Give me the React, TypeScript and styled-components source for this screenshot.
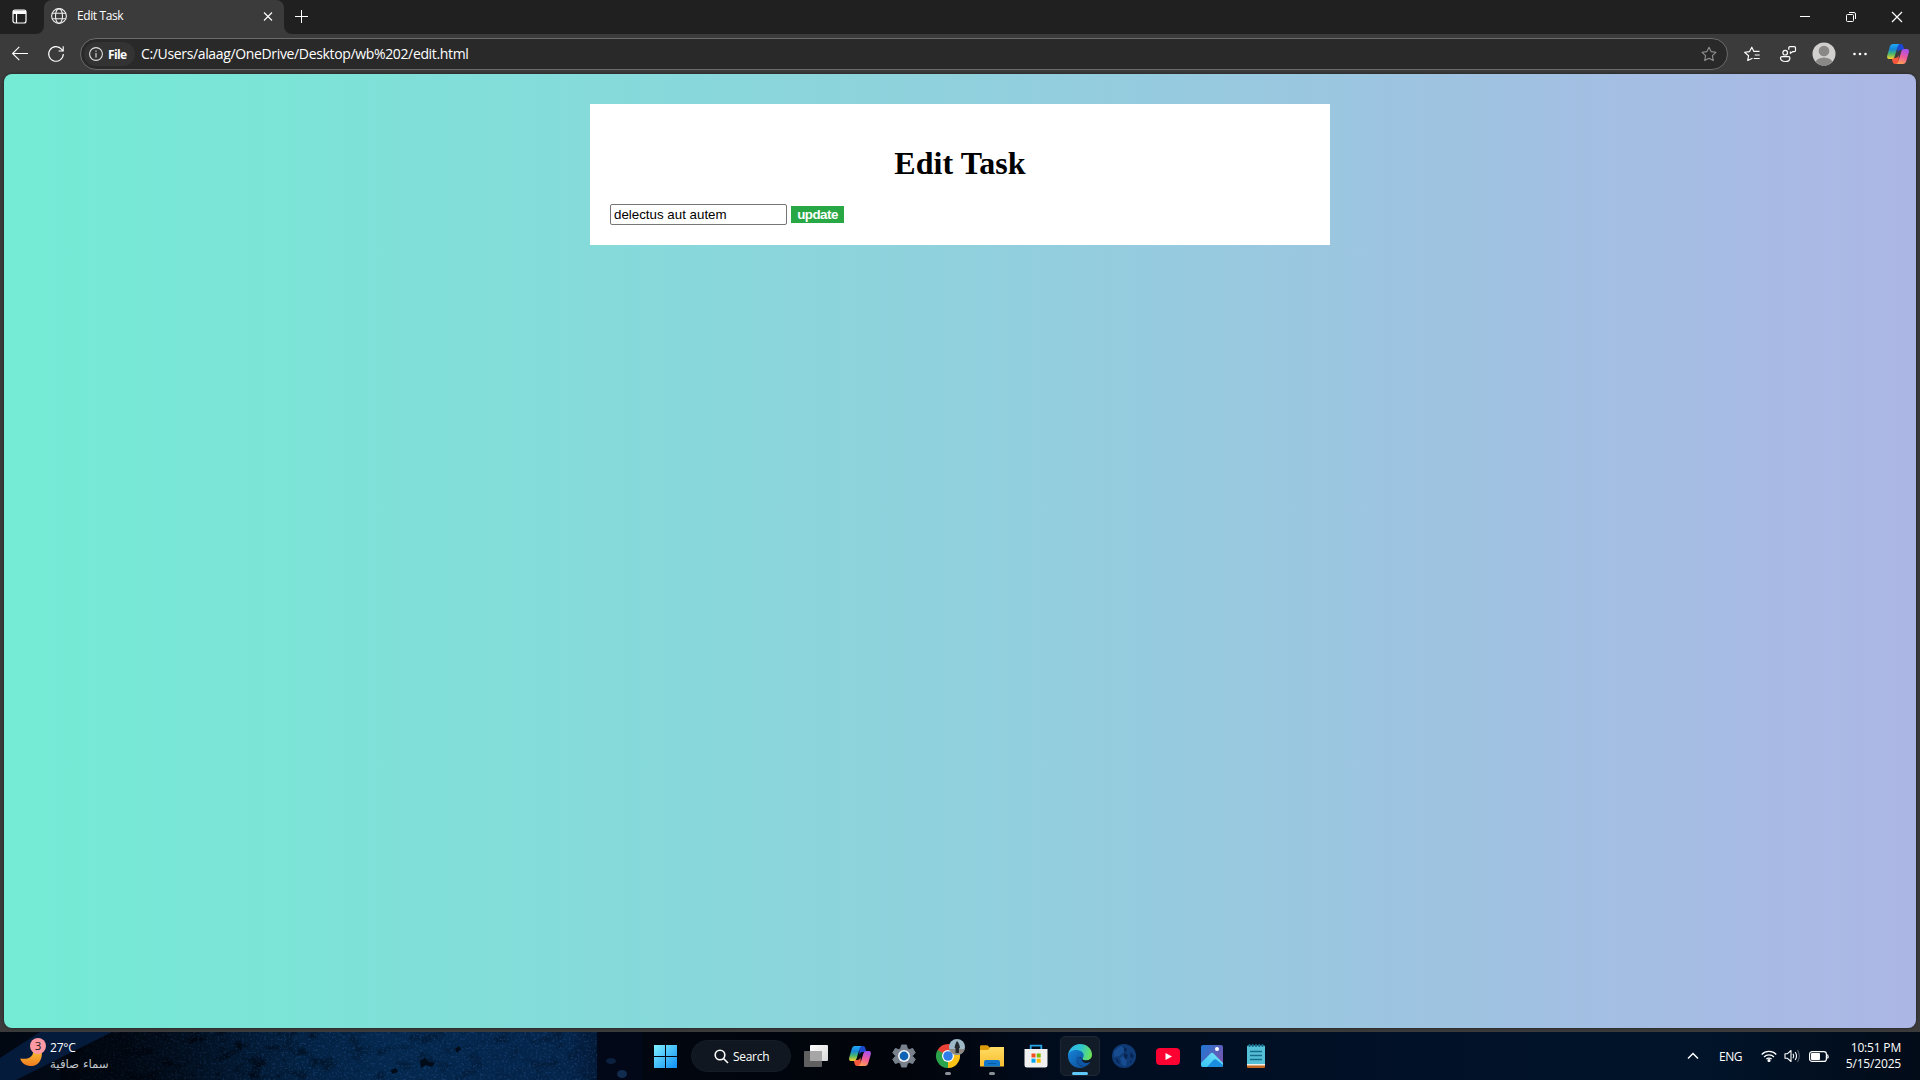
import React from 'react';
import styled, { createGlobalStyle } from 'styled-components';

const ui = '"Open Sans", "Noto Sans", sans-serif';

const Global = createGlobalStyle`
  html, body { margin: 0; padding: 0; overflow: hidden; background: #3b3b3b; }
  *, *::before, *::after { box-sizing: border-box; }
`;
const Screen = styled.div`
  width: 1920px; height: 1080px; display: flex; flex-direction: column; overflow: hidden;
  background: #3b3b3b; font-family: ${ui}; color: #fff;
`;
const Icon = styled.svg`display: block; flex: none; overflow: visible;`;

/* ---------- tab strip ---------- */
const TabStrip = styled.header`height: 34px; flex: none; display: flex; background: #202020;`;
const TabActions = styled.div`
  display: flex; align-items: center; background: #202020; padding-bottom: 2px;
  width: 44px; padding-left: 12px; border-bottom-right-radius: 8px;
`;
const Corner = styled.div<{ $grow?: boolean }>`
  background: #3b3b3b; display: flex; flex: ${p => (p.$grow ? '1' : 'none')};
`;
const Tab = styled.div`
  width: 240px; height: 34px; background: #3b3b3b; border-radius: 8px 8px 0 0;
  display: flex; align-items: center; padding: 0 11px 2px 7px;
`;
const TabTitle = styled.span`
  flex: 1; margin-left: 10px; font-size: 12px; letter-spacing: -0.4px; line-height: 16px;
`;
const TabRest = styled.div`
  flex: 1; display: flex; align-items: center; justify-content: space-between;
  background: #202020; border-bottom-left-radius: 8px; padding: 0 18px 2px 11px;
`;
const WindowButtons = styled.div`display: flex; align-items: center; gap: 36px; padding-top: 2px;`;

/* ---------- toolbar ---------- */
const Toolbar = styled.div`height: 40px; flex: none; display: flex; align-items: center; padding: 0 11px 0 12px;`;
const NavButtons = styled.div`display: flex; gap: 20px; width: 68px; align-items: center;`;
const Address = styled.div`
  width: 1648px; height: 32px; border: 1px solid #6b6b6b; border-radius: 16px; background: #292929;
  display: flex; align-items: center; padding: 0 10px 0 3px;
`;
const Chip = styled.div`
  width: 51px; height: 24px; border-radius: 12px; background: #333;
  display: flex; align-items: center; gap: 5px; padding-left: 5px;
  font-size: 12px; font-weight: 700; letter-spacing: -0.6px;
`;
const Url = styled.span`flex: 1; margin-left: 6px; font-size: 14px; letter-spacing: -0.35px; line-height: 20px;`;
const Actions = styled.div`flex: 1; display: flex; align-items: center; margin-left: 16px;`;
const Action = styled.div<{ $gap?: number }>`margin-left: ${p => p.$gap ?? 0}px;`;

/* ---------- page ---------- */
const Page = styled.main`
  height: 954px; margin: 0 4px 4px; border-radius: 8px; padding-top: 30px; flex: none;
  background: linear-gradient(to right, #74ebd5, #acb6e5); box-shadow: 0 0 3px rgba(0, 0, 0, 0.5);
`;
const Card = styled.section`
  width: 740px; height: 141px; margin: 0 auto; padding: 20px; background: #fff; color: #000;
`;
const Heading = styled.h1`
  margin: 21px 0 23px; font: 700 32px/36px "Liberation Serif", serif; text-align: center; letter-spacing: 0.08px;
`;
const Form = styled.form`display: flex; align-items: center; gap: 4px;`;
const TaskInput = styled.input`
  width: 177px; height: 21px; margin: 0; padding: 1px 2px 1px 3px;
  border: 1px solid #767676; border-radius: 2px; background: #fff; color: #000; outline: none;
  font: 13.333px "Liberation Sans", sans-serif;
`;
const Update = styled.button`
  width: 53px; height: 17px; border: 0; padding: 0; background: #28a745; color: #fff;
  font: 700 13.333px/16px "Liberation Sans", sans-serif; letter-spacing: -0.5px;
`;

/* ---------- taskbar ---------- */
const Taskbar = styled.footer`
  height: 48px; flex: none; display: grid; grid-template-columns: 643px 1fr auto; align-items: stretch;
  background: linear-gradient(90deg, #020816 0, #01060f 700px, #01040a 900px, #010d20 1080px, #011229 1500px, #01142a 1700px, #020b18 1920px);
`;
const Weather = styled.div`display: flex; align-items: center; position: relative; padding-left: 18px; overflow: hidden;`;
const Wallpaper = styled.svg`position: absolute; left: 0; top: 0; width: 644px; height: 48px;`;
const WeatherText = styled.div`
  position: relative; margin-left: 4px; display: flex; flex-direction: column; align-items: flex-start;
  font-size: 12px; line-height: 16px;
`;
const Temp = styled.span`letter-spacing: -0.2px;`;
const Sky = styled.span`color: #c3c7cc; font-family: "DejaVu Sans", sans-serif; font-size: 11.8px; direction: rtl;`;
const MoonIcon = styled(Icon)`position: relative;`;
const Apps = styled.nav`display: flex; align-items: center;`;
const Slot = styled.div`width: 44px; height: 48px; display: flex; align-items: center; justify-content: center; position: relative;`;
const Tile = styled.div`
  width: 40px; height: 40px; border-radius: 5px; background: #121c28; border: 1px solid #1d2733;
  display: flex; align-items: center; justify-content: center;
`;
const Marker = styled.i<{ $active?: boolean }>`
  position: absolute; bottom: 5px; left: 50%; transform: translateX(-50%);
  width: ${p => (p.$active ? 16 : 6)}px; height: 3px; border-radius: 2px;
  background: ${p => (p.$active ? '#60c8f8' : '#8c9198')};
`;
const Search = styled.div`
  width: 100px; height: 32px; margin: 0 3px 0 4px; border-radius: 16px; background: #101720; border: 1px solid #151c25;
  display: flex; align-items: center; padding-left: 22px; gap: 4px; font-size: 12px; letter-spacing: -0.3px;
`;
const Tray = styled.div`display: flex; align-items: center; padding-right: 19px; font-size: 12px;`;
const Lang = styled.span`width: 24px; margin: 0 18px 0 20px; letter-spacing: -0.5px;`;
const TrayIcons = styled.div`display: flex; align-items: center; gap: 7px;`;
const Clock = styled.div`width: 72px; text-align: right; line-height: 16px; letter-spacing: -0.18px; white-space: nowrap;`;

const Copilot = ({ id, w }: { id: string; w: number }) => (
  <Icon width={w} height={w * 0.91} viewBox="0 0 22 20">
    <defs>
      <linearGradient id={id + 'a'} x1="0" y1="0" x2="0" y2="1">
        <stop offset="0" stopColor="#20a8f5" /><stop offset=".35" stopColor="#1686d8" /><stop offset=".65" stopColor="#48b66c" /><stop offset="1" stopColor="#ffd02a" />
      </linearGradient>
      <linearGradient id={id + 'b'} x1=".6" y1="0" x2=".3" y2="1">
        <stop offset="0" stopColor="#a650ef" /><stop offset=".5" stopColor="#ef5b9a" /><stop offset="1" stopColor="#ffa052" />
      </linearGradient>
    </defs>
    <path d="M10 0h4c1.500 0 2 1 2.500 2.500L17.300 6H14c-2 0-3 1-3.500 3z" fill="#1b48cf" />
    <path d="M12 20H8c-1.500 0-2-1-2.500-2.500L4.700 14H8c2 0 3-1 3.500-3z" fill="#f4573b" />
    <path d="M6 0h7c-1.500 0-2 1.500-2.500 3L7.800 12c-.6 2-1.500 3-3.300 3H2C.3 15-.3 13.500.2 11.700L2.700 3C3.300 1 4.300 0 6 0z" fill={`url(#${id}a)`} />
    <path d="M16 20H9c1.500 0 2-1.500 2.500-3l2.700-9c.6-2 1.500-3 3.300-3H20c1.700 0 2.300 1.500 1.800 3.300L19.300 17c-.6 2-1.600 3-3.300 3z" fill={`url(#${id}b)`} />
  </Icon>
);

const star = 'M8 1.200l2.100 4.400 4.800.7-3.500 3.400.9 4.900L8 12.300l-4.300 2.300.9-4.900L1.100 6.300l4.800-.7z';

export default function App() {
  return (
    <Screen>
      <Global />
      <TabStrip>
        <Corner>
          <TabActions>
            <Icon width="15" height="15" viewBox="0 0 15 15" fill="none" stroke="#fff" strokeWidth="1.200">
              <rect x="1" y="1" width="13" height="13" rx="2" /><path d="M1 1.500h13V5H1z" fill="#fff" stroke="none" /><path d="M4.500 5v9" />
            </Icon>
          </TabActions>
        </Corner>
        <Tab>
          <Icon width="16" height="16" viewBox="0 0 16 16" fill="none" stroke="#eee" strokeWidth="1.100">
            <circle cx="8" cy="8" r="7.400" /><ellipse cx="8" cy="8" rx="3.500" ry="7.400" /><path d="M1.300 5.300h13.400M1.300 10.700h13.400" />
          </Icon>
          <TabTitle>Edit Task</TabTitle>
          <Icon width="10" height="10" viewBox="0 0 10 10" stroke="#fff" strokeWidth="1.100"><path d="M1 1.500l8 8M9 1.500l-8 8" /></Icon>
        </Tab>
        <Corner $grow>
          <TabRest>
            <Icon width="13" height="13" viewBox="0 0 13 13" stroke="#fff"><path d="M0 6.500h13M6.500 0v13" /></Icon>
            <WindowButtons>
              <Icon width="10" height="10" viewBox="0 0 10 10" stroke="#fff"><path d="M0 4.500h10" /></Icon>
              <Icon width="10" height="10" viewBox="0 0 10 10" stroke="#fff" fill="none"><rect x=".5" y="2.500" width="7" height="7" rx="1" /><path d="M3 .5h5A1.500 1.500 0 0 1 9.500 2v5" /></Icon>
              <Icon width="10" height="10" viewBox="0 0 10 10" stroke="#fff" strokeWidth="1.200"><path d="M0 0l10 10M10 0L0 10" /></Icon>
            </WindowButtons>
          </TabRest>
        </Corner>
      </TabStrip>

      <Toolbar>
        <NavButtons>
          <Icon width="16" height="16" viewBox="0 0 16 16" fill="none" stroke="#fff" strokeWidth="1.100"><path d="M16 7.500H.8M7.300.8L.6 7.500l6.700 6.700" /></Icon>
          <Icon width="16" height="16" viewBox="0 0 16 16" fill="none" stroke="#fff" strokeWidth="1.100"><path d="M15.300 8A7.300 7.300 0 1 1 13.700 3.400L15 5M15.200.3V5h-4.700" /></Icon>
        </NavButtons>
        <Address>
          <Chip>
            <Icon width="14" height="14" viewBox="0 0 14 14" fill="none" stroke="#e0e0e0" strokeWidth="1.100"><circle cx="7" cy="7" r="6.400" /><path d="M7 6v4.500M7 3.500v1.300" /></Icon>
            File
          </Chip>
          <Url>C:/Users/alaag/OneDrive/Desktop/wb%202/edit.html</Url>
          <Icon width="16" height="16" viewBox="0 0 16 16" fill="none" stroke="#909090" strokeWidth="1.100" strokeLinejoin="round"><path d={star} /></Icon>
        </Address>
        <Actions>
          <Action>
            <Icon width="16" height="16" viewBox="0 0 16 16" fill="none" stroke="#fff" strokeWidth="1.150" strokeLinejoin="round"><path d="M8.500 12.300L3.700 14.600l.9-4.900L.6 6.300l5-.7L7.800 1.200l2.100 4.200h5.600M10.700 9h5M9.700 12.500h6" /></Icon>
          </Action>
          <Action $gap={20}>
            <Icon width="16" height="16" viewBox="0 0 16 16" fill="none" stroke="#fff" strokeWidth="1.200" strokeLinejoin="round"><circle cx="5.200" cy="6.700" r="2.300" /><path d="M1.700 10.700h7a1.200 1.200 0 0 1 1.200 1.200c0 2.200-2 3.600-4.700 3.600S.5 14.100.5 11.900a1.200 1.200 0 0 1 1.200-1.200zM8.800 3.800V1.800A1.200 1.200 0 0 1 10 .6h4.300a1.200 1.200 0 0 1 1.200 1.200v2.700a1.200 1.200 0 0 1-1.200 1.200h-1.700L10.400 7.300V5.500" /></Icon>
          </Action>
          <Action $gap={16}>
            <Icon width="24" height="24" viewBox="0 0 24 24">
              <clipPath id="avatar"><circle cx="12" cy="12" r="11.500" /></clipPath>
              <circle cx="12" cy="12" r="11.500" fill="#d2d0ce" /><g clipPath="url(#avatar)" fill="#8a8886"><circle cx="12" cy="9" r="5.300" /><ellipse cx="12" cy="21" rx="8.500" ry="5.600" /></g>
            </Icon>
          </Action>
          <Action $gap={17}>
            <Icon width="14" height="4" viewBox="0 0 14 4" fill="#fff"><circle cx="1.500" cy="2" r="1.300" /><circle cx="7" cy="2" r="1.300" /><circle cx="12.500" cy="2" r="1.300" /></Icon>
          </Action>
          <Action $gap={20}><Copilot id="edgeCopilot" w={22} /></Action>
        </Actions>
      </Toolbar>

      <Page>
        <Card>
          <Heading>Edit Task</Heading>
          <Form>
            <TaskInput type="text" defaultValue="delectus aut autem" />
            <Update type="button">update</Update>
          </Form>
        </Card>
      </Page>

      <Taskbar>
        <Weather>
          <Wallpaper viewBox="0 0 644 48" preserveAspectRatio="none">
            <defs>
              <linearGradient id="rock" x1="0" x2="1">
                <stop offset="0" stopColor="#020812" /><stop offset=".2" stopColor="#020c1a" /><stop offset=".4" stopColor="#031d3a" /><stop offset=".65" stopColor="#04284e" /><stop offset=".95" stopColor="#05254b" /><stop offset="1" stopColor="#041a38" />
              </linearGradient>
              <filter id="grain" x="0" y="0" width="100%" height="100%" colorInterpolationFilters="sRGB">
                <feTurbulence type="fractalNoise" baseFrequency=".06 .08" numOctaves="5" seed="11" />
                <feColorMatrix values="0 0 0 0 0  0 0 0 0 .02  0 0 0 0 .06  4 0 0 0 -2.050" />
              </filter>
              <filter id="sparkle" x="0" y="0" width="100%" height="100%" colorInterpolationFilters="sRGB">
                <feTurbulence type="fractalNoise" baseFrequency=".45" numOctaves="3" seed="3" />
                <feColorMatrix values="0 0 0 0 .13  0 0 0 0 .3  0 0 0 0 .52  0 5 0 0 -2.700" />
              </filter>
              <linearGradient id="shade" x1="0" x2="1">
                <stop offset="0" stopColor="#01050c" stopOpacity=".8" /><stop offset=".45" stopColor="#01050c" stopOpacity="0" />
              </linearGradient>
              <linearGradient id="fade" x1="0" x2="1">
                <stop offset="0" stopColor="#fff" /><stop offset=".35" stopColor="#fff" stopOpacity=".8" /><stop offset=".55" stopColor="#fff" stopOpacity=".3" /><stop offset="1" stopColor="#fff" stopOpacity=".25" />
              </linearGradient>
              <mask id="grainMask"><rect width="644" height="48" fill="url(#fade)" /></mask>
            </defs>
            <rect width="597" height="48" fill="url(#rock)" />
            <g mask="url(#grainMask)"><rect x="60" width="537" height="48" filter="url(#grain)" /></g>
            <rect x="80" width="517" height="48" filter="url(#sparkle)" opacity=".4" />
            <path d="M420 29l5-3 4 4 6 1-3 4-6-2-5 3zM391 38l5-2 2 4-6 2zM455 17l4-3 2 3-4 4z" fill="#020b18" />
            <rect x="60" width="537" height="48" fill="url(#shade)" />
            <path d="M0 26L40 0h72L0 56z" fill="#051b3c" />
            <path d="M597 0h47v48h-47z" fill="#020817" />
            <ellipse cx="611" cy="29" rx="5" ry="3" fill="#0c2040" /><ellipse cx="622" cy="42" rx="5" ry="4" fill="#122c50" />
          </Wallpaper>
          <MoonIcon width="28" height="30" viewBox="0 0 28 30">
            <defs><linearGradient id="moon" x1="0" x2="0" y1="0" y2="1"><stop offset="0" stopColor="#f9c63b" /><stop offset="1" stopColor="#f07c1d" /></linearGradient></defs>
            <path d="M23.500 8c2 10-3 17-10 17-5.500 0-9.500-2-11.300-7.500 8.500 1.500 14-2 13-9.500z" fill="url(#moon)" />
            <circle cx="20" cy="5" r="8" fill="#ff99a4" />
            <text x="20" y="9" textAnchor="middle" fontSize="11.500" fill="#1a1a1a">3</text>
          </MoonIcon>
          <WeatherText><Temp>27°C</Temp><Sky>سماء صافية</Sky></WeatherText>
        </Weather>

        <Apps>
          <Slot>
            <Icon width="23" height="23" viewBox="0 0 23 23">
              <defs><linearGradient id="win" x1="0" y1="0" x2="23" y2="23" gradientUnits="userSpaceOnUse"><stop offset="0" stopColor="#7ff0ff" /><stop offset="1" stopColor="#0f8ff5" /></linearGradient></defs>
              <path d="M0 0h11v11H0zM12 0h11v11H12zM0 12h11v11H0zM12 12h11v11H12z" fill="url(#win)" />
            </Icon>
          </Slot>
          <Search>
            <Icon width="15" height="15" viewBox="0 0 15 15" fill="none" stroke="#fff" strokeWidth="1.600"><circle cx="6" cy="6" r="4.800" /><path d="M9.500 9.500L14 14" /></Icon>
            Search
          </Search>
          <Slot>
            <Icon width="24" height="22" viewBox="0 0 24 22">
              <defs><linearGradient id="tv" x1="0" y1="0" x2="1" y2="1"><stop offset="0" stopColor="#fff" /><stop offset="1" stopColor="#d8d8d8" /></linearGradient></defs>
              <rect x="6" width="18" height="16" rx="1" fill="url(#tv)" /><rect y="6" width="18" height="16" rx="1" fill="#606060" /><path d="M6 6h12v10H6z" fill="#a6a6a6" />
            </Icon>
          </Slot>
          <Slot><Copilot id="barCopilot" w={22} /></Slot>
          <Slot>
            <Icon width="24" height="24" viewBox="0 0 24 24">
              <path d="M9.500 1h5l.8 3.500 2 1.100L20.700 4.500 23.300 9l-2.600 2.300v1.400L23.300 15l-2.600 4.500-3.400-1.100-2 1.100-.8 3.500h-5l-.8-3.500-2-1.100-3.400 1.100L.7 15l2.600-2.300v-1.400L.7 9l2.600-4.500 3.400 1.100 2-1.100z" fill="#79818c" stroke="#79818c" strokeLinejoin="round" />
              <circle cx="12" cy="12" r="6" fill="#f2f5f8" /><circle cx="12" cy="12" r="4.400" fill="#0d62b4" />
            </Icon>
          </Slot>
          <Slot>
            <Icon width="24" height="24" viewBox="0 0 24 24">
              <path d="M12 12L12 24A12 12 0 0 1 1.600 6z" fill="#2ba24c" />
              <path d="M12 12l10.400-6A12 12 0 0 1 12 24z" fill="#fbc116" /><path d="M1.600 6L6.800 15 12 12V6.500z" fill="#2ba24c" /><path d="M1.600 6A12 12 0 0 1 22.400 6H12l-5.200 3z" fill="#e94235" /><path d="M12 24l5.200-9-5.200-3z" fill="#fbc116" />
              <circle cx="12" cy="12" r="6" fill="#fff" /><circle cx="12" cy="12" r="4.800" fill="#2f7de9" />
              <circle cx="21" cy="3" r="8" fill="#9db9c8" /><path d="M13.300 5a8 8 0 0 0 15.400 0z" fill="#8d8880" /><path d="M19.500 9V4.500l-1-1 .8-3 1.200-3h1.200l1.500 3 .8 3-1 1V9z" fill="#252a30" />
            </Icon>
            <Marker />
          </Slot>
          <Slot>
            <Icon width="24" height="22" viewBox="0 0 24 22">
              <defs><linearGradient id="fold" x1="0" y1="0" x2="0" y2="1"><stop offset="0" stopColor="#ffdc62" /><stop offset="1" stopColor="#f9bd31" /></linearGradient></defs>
              <path d="M0 8V1.500Q0 .3 1.300.3h6L10 2.500V8z" fill="#dc9b08" /><path d="M0 5h8l2.500-3H24v19.600H0z" fill="url(#fold)" />
              <path d="M4 21.500V17q0-2 2-2h12q2 0 2 2v4.500z" fill="#1177cb" /><path d="M8 18.500h8" stroke="#0b5aa6" />
            </Icon>
            <Marker />
          </Slot>
          <Slot>
            <Icon width="24" height="24" viewBox="0 0 24 24">
              <path d="M6.700 5.500V1.700h10.600v3.800" fill="none" stroke="#27a3e6" strokeWidth="1.800" />
              <path d="M.5 5h23v16q0 2.500-2.500 2.500H3Q.5 23.500.5 21z" fill="#f0f0f0" />
              <path d="M7.500 9.500h4v4h-4z" fill="#f25022" /><path d="M12.700 9.500h4v4h-4z" fill="#7fba00" /><path d="M7.500 14.700h4v4h-4z" fill="#00a4ef" /><path d="M12.700 14.700h4v4h-4z" fill="#ffb900" />
            </Icon>
          </Slot>
          <Slot>
            <Tile>
              <Icon width="24" height="24" viewBox="0 0 24 24">
                <defs>
                  <linearGradient id="eTop" x1="0" y1=".3" x2="1" y2=".5"><stop offset="0" stopColor="#2fb5ee" /><stop offset=".5" stopColor="#2fc5cf" /><stop offset="1" stopColor="#6be257" /></linearGradient>
                  <linearGradient id="eLow" x1="0" y1="0" x2="1" y2="1"><stop offset="0" stopColor="#1684d8" /><stop offset="1" stopColor="#0b4a94" /></linearGradient>
                </defs>
                <path d="M0 12C.4 5 5.500 0 12 0c7 0 12 5 12 10.500 0 4-2.800 6-6 6-3 0-4.300-1.200-3.700-2.200 1.700-2.600.2-6-4.300-6-4.500 0-8 1.700-10 3.700z" fill="url(#eTop)" />
                <path d="M0 12C.5 8 4 6 8 6c4.500 0 7.700 2.300 7.700 5.500 0 1.600-.9 2.300-1.400 3-3-2.500-6-.5-5.500 2.500.6 4 5 6.500 10 4.700C16.500 23.500 14.300 24 12 24 5.300 24 0 18.600 0 12z" fill="url(#eLow)" />
                <path d="M9 12.500c-1.800 4.500 1.500 9.800 7.500 9.800 2.700-.4 4.800-2 5.900-4.300-4.400 2.400-8.900.5-8.100-3.500-2-.6-3.500-1.700-5.300-2z" fill="#0f56a5" />
                <path d="M14.300 14.300c-.6 1 .7 2.200 3.700 2.200 2 0 3.800-.7 4.900-2-1 2.700-3 3.700-5 3.700-2.600 0-5.100-1.600-3.600-3.900z" fill="#121c28" />
              </Icon>
            </Tile>
            <Marker $active />
          </Slot>
          <Slot>
            <Icon width="24" height="24" viewBox="0 0 24 24">
              <circle cx="12" cy="12" r="12" fill="#0e3a75" />
              <path d="M2 7l7-5 4 3-2 4-4 3-5 1zM8 14l4-2 3 4-1 6-4-1z" fill="#174c90" />
              <path d="M12 3l3 2-1 3-2-1zM12 9l4 2-2 5-2-3zM3 13l3 3 2 4-3-2zM19 8l3 4-2 3-2-3zM18 17l2-1-2 4z" fill="#082552" />
            </Icon>
          </Slot>
          <Slot><Icon width="24" height="17" viewBox="0 0 24 17"><rect width="24" height="17" rx="4" fill="#ff0033" /><path d="M9.500 5l6.500 3.500L9.500 12z" fill="#fff" /></Icon></Slot>
          <Slot>
            <Icon width="22" height="22" viewBox="0 0 22 22">
              <defs>
                <linearGradient id="ph" x1="0" y1="0" x2="1" y2=".6"><stop offset="0" stopColor="#1d78d4" /><stop offset="1" stopColor="#7355b0" /></linearGradient>
                <linearGradient id="hill" x1="0" y1="1" x2="1" y2="0"><stop offset="0" stopColor="#35c3f3" /><stop offset="1" stopColor="#7ae2fb" /></linearGradient>
              </defs>
              <rect width="22" height="22" rx="2" fill="url(#ph)" />
              <path d="M0 18L9.500 8.500q1.500-1.300 3 0L22 18v2q0 2-2 2H2q-2 0-2-2z" fill="url(#hill)" /><path d="M6 22l6.500-7q1.500-1.500 3-.3L22 20q0 2-2 2z" fill="#1a8ddf" /><circle cx="16" cy="4" r="2" fill="#fff" />
            </Icon>
          </Slot>
          <Slot>
            <Icon width="18" height="24" viewBox="0 0 18 24">
              <rect y="1.500" width="18" height="20" rx="1" fill="#55bfd8" /><path d="M0 20.500h18V23q0 1-1 1H1q-1 0-1-1z" fill="#c4661f" /><path d="M0 20h18v1.500H0z" fill="#f3eee6" />
              <path d="M2.500 0v3M5.700 0v3M9 0v3M12.300 0v3M15.500 0v3" stroke="#156b8a" strokeWidth="1.600" /><path d="M3 7.500h12M3 11.500h12M3 15.500h12" stroke="#156b8a" strokeWidth="1.700" />
            </Icon>
          </Slot>
        </Apps>

        <Tray>
          <Icon width="12" height="8" viewBox="0 0 12 8" fill="none" stroke="#fff" strokeWidth="1.500"><path d="M1 6.500l5-5 5 5" /></Icon>
          <Lang>ENG</Lang>
          <TrayIcons>
            <Icon width="16" height="12" viewBox="0 0 16 12" fill="none" stroke="#fff" strokeWidth="1.200"><path d="M.7 4.500a10.300 10.300 0 0 1 14.600 0M3 7a7 7 0 0 1 10 0M5.300 9.200a3.800 3.800 0 0 1 5.400 0" /><circle cx="8" cy="10.500" r="1" fill="#fff" /></Icon>
            <Icon width="18" height="14" viewBox="0 0 18 14" fill="none" stroke="#fff" strokeWidth="1.100"><path d="M1 4.700h2.500L7 1.500v11L3.500 9.300H1z" strokeLinejoin="round" /><path d="M9 4.700q1.500 2.300 0 4.600M11.200 3q2.600 4 0 8" /><path d="M13.500 1q3.500 6 0 12" stroke="#56606e" /></Icon>
            <Icon width="20" height="11" viewBox="0 0 20 11"><rect x=".6" y=".6" width="16.800" height="9.800" rx="2.500" fill="none" stroke="#fff" strokeWidth="1.200" /><rect x="2" y="2" width="9" height="7" rx="1" fill="#fff" /><path d="M18.500 3.500q1.200 2 0 4" stroke="#fff" fill="none" strokeWidth="1.200" /></Icon>
          </TrayIcons>
          <Clock>10:51 PM<br />5/15/2025</Clock>
        </Tray>
      </Taskbar>
    </Screen>
  );
}
